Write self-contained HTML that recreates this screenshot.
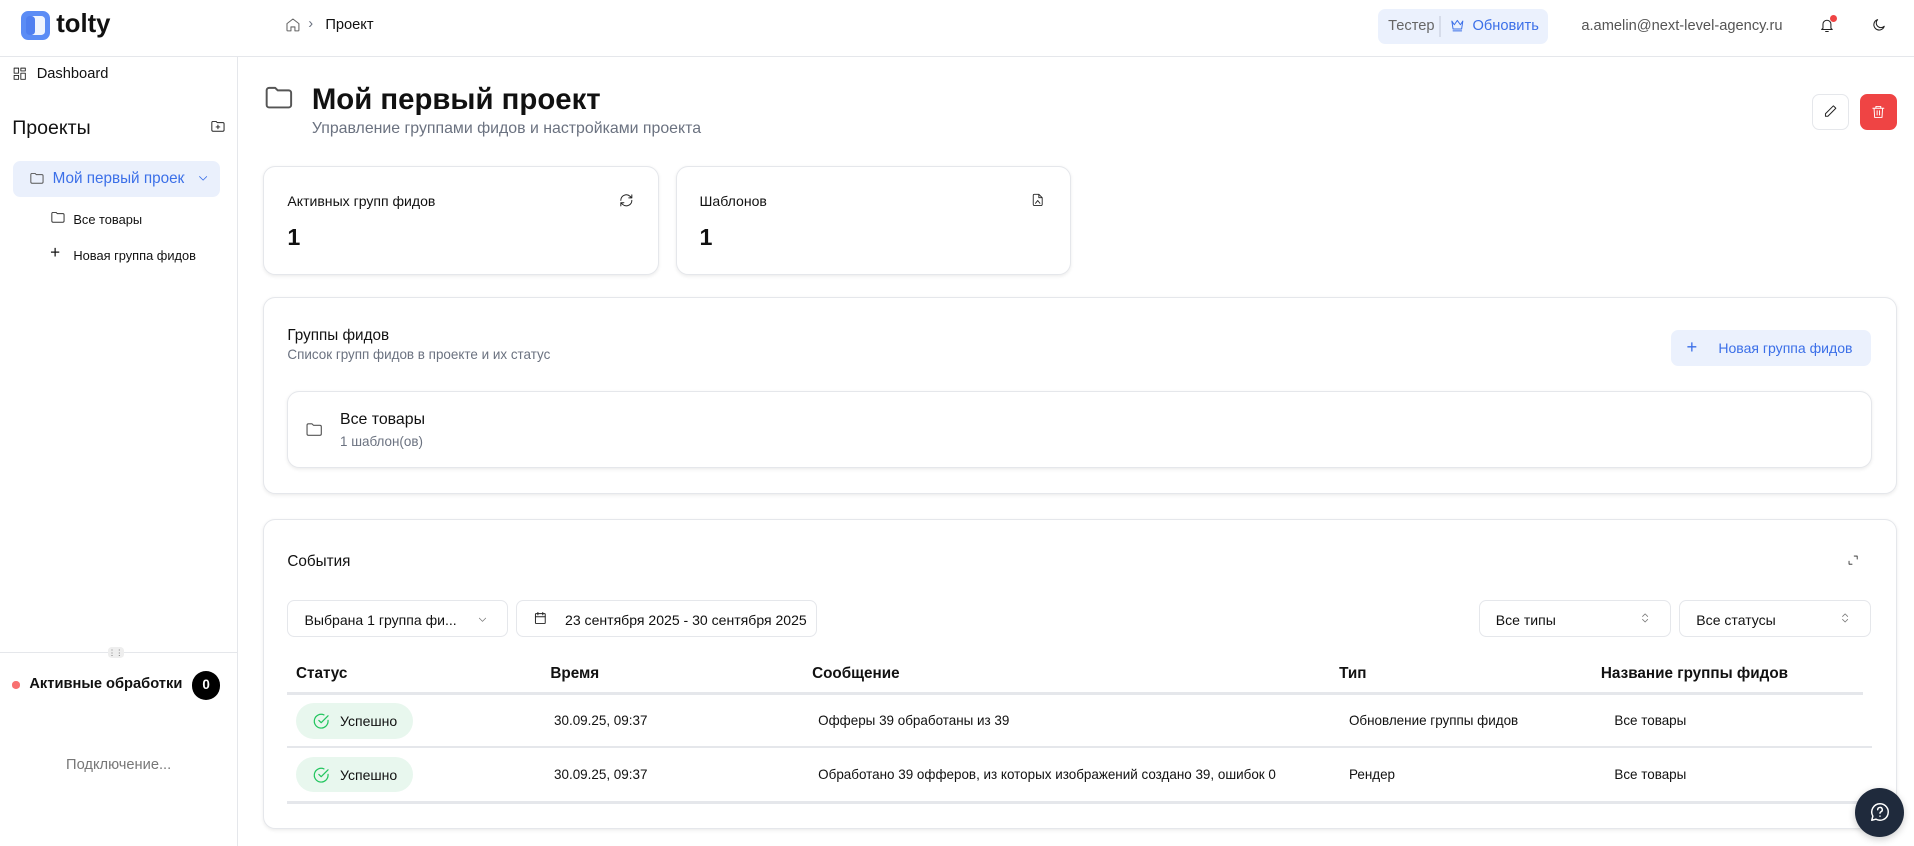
<!DOCTYPE html>
<html><head><meta charset="utf-8"><style>
html{zoom:1.2230}
*{box-sizing:border-box;margin:0;padding:0}
body{width:1565px;height:692px;overflow:hidden;background:#fff;font-family:"Liberation Sans","Noto Sans CJK SC",sans-serif;color:#111;font-size:12px;position:relative}
.a{position:absolute;white-space:nowrap}
.card{position:absolute;border:1px solid #e5e7eb;border-radius:10px;background:#fff;box-shadow:0 1px 3px rgba(0,0,0,.08)}
.g{color:#6b7280}
.b{font-weight:bold}
svg{position:absolute;fill:none;stroke:currentColor;stroke-width:1.6;stroke-linecap:round;stroke-linejoin:round}
.btn{position:absolute;border:1px solid #e5e7eb;border-radius:6px;background:#fff}
.hl{position:absolute;height:2px;background:#e5e7eb}
.badge{position:absolute;left:242px;width:96px;height:29px;border-radius:15px;background:#e8f7ee}
</style></head><body>
<!-- header -->
<div class="a" style="left:0;top:46px;width:1565px;height:1px;background:#e5e7eb"></div>
<div class="a" style="left:17px;top:9px;width:24px;height:24px;border-radius:6px;background:#5b8cf5"></div>
<div class="a" style="left:24px;top:13px;width:13px;height:16px;border-radius:3px;background:#fff;opacity:.9"></div>
<div class="a" style="left:21px;top:13px;width:8px;height:16px;border-radius:3px;background:#4f7ff0"></div>
<div class="a b" style="left:46px;top:8px;font-size:21px;color:#111">tolty</div>
<svg style="left:233px;top:14px" width="13" height="13" viewBox="0 0 24 24" color="#666"><path d="M3 10l9-7 9 7v10a1 1 0 0 1-1 1h-5v-6h-6v6H4a1 1 0 0 1-1-1z"/></svg>
<div class="a g" style="left:252px;top:13px;font-size:12px">›</div>
<div class="a" style="left:266px;top:14px;font-size:12px">Проект</div>
<div class="a" style="left:1127px;top:7px;width:139px;height:29px;border-radius:6px;background:#ebf1fd"></div>
<div class="a g" style="left:1135px;top:15px;font-size:12px;color:#666">Тестер</div>
<div class="a" style="left:1177px;top:13px;width:1px;height:17px;background:#d6dcea"></div>
<svg style="left:1186px;top:15px" width="12" height="12" viewBox="0 0 24 24" color="#3b6fe8"><path d="M3 5l4 6 5-7 5 7 4-6-2 13H5z M5 21h14"/></svg>
<div class="a" style="left:1204px;top:15px;font-size:12px;color:#3b6fe8">Обновить</div>
<div class="a" style="left:1293px;top:15px;font-size:12px;color:#555">a.amelin@next-level-agency.ru</div>
<svg style="left:1487px;top:14px" width="13" height="14" viewBox="0 0 24 24" color="#222"><path d="M6 16V10a6 6 0 0 1 12 0v6l2 2H4z M10 21h4"/></svg>
<div class="a" style="left:1496px;top:12px;width:6px;height:6px;border-radius:3px;background:#ef4444"></div>
<svg style="left:1530px;top:14px" width="13" height="13" viewBox="0 0 24 24" color="#222"><path d="M20 14A8 8 0 1 1 10 4a6 6 0 0 0 10 10z"/></svg>
<!-- sidebar -->
<div class="a" style="left:194px;top:47px;width:1px;height:645px;background:#e5e7eb"></div>
<svg style="left:11px;top:55px" width="11" height="11" viewBox="0 0 24 24" color="#222" stroke-width="2.5"><rect x="2" y="2" width="8" height="9"/><rect x="14" y="2" width="8" height="5"/><rect x="14" y="11" width="8" height="11"/><rect x="2" y="15" width="8" height="7"/></svg>
<div class="a" style="left:30px;top:54px;font-size:12px">Dashboard</div>
<div class="a" style="left:10px;top:96px;font-size:16px">Проекты</div>
<svg style="left:172px;top:97px" width="13" height="12" viewBox="0 0 24 24" color="#222" stroke-width="2"><path d="M2 6a2 2 0 0 1 2-2h5l2 2h9a2 2 0 0 1 2 2v10a2 2 0 0 1-2 2H4a2 2 0 0 1-2-2z M12 10v6 M9 13h6"/></svg>
<div class="a" style="left:11px;top:132px;width:169px;height:29px;border-radius:6px;background:#eaf0fc"></div>
<svg style="left:24px;top:140px" width="13" height="12" viewBox="0 0 24 24" color="#555" stroke-width="2"><path d="M2 6a2 2 0 0 1 2-2h5l2 2h9a2 2 0 0 1 2 2v10a2 2 0 0 1-2 2H4a2 2 0 0 1-2-2z"/></svg>
<div class="a" style="left:43px;top:139px;font-size:12.5px;color:#3b6fe8;width:108px;overflow:hidden">Мой первый проект</div>
<svg style="left:161px;top:141px" width="10" height="10" viewBox="0 0 24 24" color="#3b6fe8"><path d="M5 9l7 7 7-7"/></svg>
<svg style="left:41px;top:172px" width="13" height="12" viewBox="0 0 24 24" color="#333" stroke-width="2"><path d="M2 6a2 2 0 0 1 2-2h5l2 2h9a2 2 0 0 1 2 2v10a2 2 0 0 1-2 2H4a2 2 0 0 1-2-2z"/></svg>
<div class="a" style="left:60px;top:173px;font-size:10.5px">Все товары</div>
<div class="a" style="left:41px;top:199px;font-size:14px">+</div>
<div class="a" style="left:60px;top:203px;font-size:10.5px">Новая группа фидов</div>
<div class="a" style="left:0;top:533px;width:194px;height:1px;background:#e5e7eb"></div>
<div class="a" style="left:88px;top:529px;width:13px;height:9px;border-radius:3px;background:#eee;font-size:6px;text-align:center;color:#666;line-height:9px">⋮⋮</div>
<div class="a" style="left:10px;top:557px;width:6px;height:6px;border-radius:3px;background:#f87171"></div>
<div class="a b" style="left:24px;top:553px;font-size:12px">Активные обработки</div>
<div class="a b" style="left:157px;top:549px;width:23px;height:23px;border-radius:12px;background:#000;color:#fff;font-size:11px;text-align:center;line-height:23px">0</div>
<div class="a g" style="left:0;width:194px;text-align:center;top:619px;font-size:12px;color:#777">Подключение...</div>
<!-- title -->
<svg style="left:215px;top:68px" width="26" height="24" viewBox="0 0 24 24" color="#555" stroke-width="1.8"><path d="M2 6a2 2 0 0 1 2-2h5l2 2h9a2 2 0 0 1 2 2v10a2 2 0 0 1-2 2H4a2 2 0 0 1-2-2z"/></svg>
<div class="a b" style="left:255px;top:68px;font-size:24px">Мой первый проект</div>
<div class="a g" style="left:255px;top:98px;font-size:13px">Управление группами фидов и настройками проекта</div>
<div class="btn" style="left:1482px;top:77px;width:30px;height:29px"></div>
<svg style="left:1491px;top:85px" width="12" height="12" viewBox="0 0 24 24" color="#222" stroke-width="2"><path d="M17 3l4 4L8 20H4v-4z"/></svg>
<div class="a" style="left:1521px;top:77px;width:30px;height:29px;border-radius:6px;background:#ef4444"></div>
<svg style="left:1530px;top:85px" width="12" height="13" viewBox="0 0 24 24" color="#fff" stroke-width="2"><path d="M3 6h18 M8 6V3h8v3 M5 6l1 15h12l1-15 M10 10v7 M14 10v7"/></svg>
<!-- stat cards -->
<div class="card" style="left:215px;top:136px;width:324px;height:89px"></div>
<div class="a" style="left:235px;top:158px;font-size:11.5px">Активных групп фидов</div>
<svg style="left:506px;top:158px" width="12" height="12" viewBox="0 0 24 24" color="#222" stroke-width="2"><path d="M21 12a9 9 0 0 1-15 6.7L3 16 M3 12a9 9 0 0 1 15-6.7L21 8 M21 3v5h-5 M3 21v-5h5"/></svg>
<div class="a b" style="left:235px;top:183px;font-size:19px">1</div>
<div class="card" style="left:553px;top:136px;width:323px;height:89px"></div>
<div class="a" style="left:572px;top:158px;font-size:11.5px">Шаблонов</div>
<svg style="left:843px;top:157px" width="11" height="13" viewBox="0 0 24 24" color="#222" stroke-width="2"><path d="M14 2H6a2 2 0 0 0-2 2v16a2 2 0 0 0 2 2h12a2 2 0 0 0 2-2V8z M14 2v6h6 M8 18l4-5 4 5"/></svg>
<div class="a b" style="left:572px;top:183px;font-size:19px">1</div>
<!-- groups -->
<div class="card" style="left:215px;top:243px;width:1336px;height:161px"></div>
<div class="a" style="left:235px;top:267px;font-size:12.5px">Группы фидов</div>
<div class="a g" style="left:235px;top:284px;font-size:11px">Список групп фидов в проекте и их статус</div>
<div class="a" style="left:1366px;top:270px;width:164px;height:29px;border-radius:6px;background:#ebf1fd"></div>
<div class="a" style="left:1379px;top:275px;font-size:15px;color:#3b6fe8">+</div>
<div class="a" style="left:1405px;top:278px;font-size:11.5px;color:#3b6fe8">Новая группа фидов</div>
<div class="card" style="left:235px;top:320px;width:1296px;height:63px"></div>
<svg style="left:249px;top:344px" width="15" height="14" viewBox="0 0 24 24" color="#555" stroke-width="1.8"><path d="M2 6a2 2 0 0 1 2-2h5l2 2h9a2 2 0 0 1 2 2v10a2 2 0 0 1-2 2H4a2 2 0 0 1-2-2z"/></svg>
<div class="a" style="left:278px;top:336px;font-size:13px">Все товары</div>
<div class="a g" style="left:278px;top:355px;font-size:11px">1 шаблон(ов)</div>
<!-- events -->
<div class="card" style="left:215px;top:424px;width:1336px;height:254px"></div>
<div class="a" style="left:235px;top:452px;font-size:12.5px">События</div>
<svg style="left:1510px;top:453px" width="10" height="10" viewBox="0 0 24 24" color="#222" stroke-width="3"><path d="M14 4h6v6 M10 20H4v-6"/></svg>
<div class="btn" style="left:235px;top:491px;width:180px;height:30px"></div>
<div class="a" style="left:249px;top:500px;font-size:11.5px">Выбрана 1 группа фи...</div>
<svg style="left:390px;top:502px" width="9" height="9" viewBox="0 0 24 24" color="#777"><path d="M5 9l7 7 7-7"/></svg>
<div class="btn" style="left:422px;top:491px;width:246px;height:30px"></div>
<svg style="left:436px;top:499px" width="12" height="13" viewBox="0 0 24 24" color="#222" stroke-width="2"><rect x="4" y="5" width="16" height="16" rx="1"/><path d="M4 10h16 M8 3v4 M16 3v4"/></svg>
<div class="a" style="left:462px;top:500px;font-size:11.5px">23 сентября 2025 - 30 сентября 2025</div>
<div class="btn" style="left:1209px;top:491px;width:157px;height:30px"></div>
<div class="a" style="left:1223px;top:500px;font-size:11.5px">Все типы</div>
<svg style="left:1340px;top:499px" width="10" height="13" viewBox="0 0 24 24" color="#777"><path d="M7 9l5-5 5 5 M7 15l5 5 5-5"/></svg>
<div class="btn" style="left:1373px;top:491px;width:157px;height:30px"></div>
<div class="a" style="left:1387px;top:500px;font-size:11.5px">Все статусы</div>
<svg style="left:1504px;top:499px" width="10" height="13" viewBox="0 0 24 24" color="#777"><path d="M7 9l5-5 5 5 M7 15l5 5 5-5"/></svg>
<div class="a b" style="left:242px;top:544px;font-size:12.5px">Статус</div>
<div class="a b" style="left:450px;top:544px;font-size:12.5px">Время</div>
<div class="a b" style="left:664px;top:544px;font-size:12.5px">Сообщение</div>
<div class="a b" style="left:1095px;top:544px;font-size:12.5px">Тип</div>
<div class="a b" style="left:1309px;top:544px;font-size:12.5px">Название группы фидов</div>
<div class="hl" style="left:235px;top:566px;width:1288px"></div>
<div class="badge" style="top:575px"></div>
<svg style="left:255px;top:582px" width="15" height="15" viewBox="0 0 24 24" color="#22c55e" stroke-width="2"><path d="M21 11v1a9 9 0 1 1-5.3-8.2 M21 5l-9 9-3-3"/></svg>
<div class="a" style="left:278px;top:583px;font-size:11.5px">Успешно</div>
<div class="a" style="left:453px;top:583px;font-size:11px">30.09.25, 09:37</div>
<div class="a" style="left:669px;top:583px;font-size:11px">Офферы 39 обработаны из 39</div>
<div class="a" style="left:1103px;top:583px;font-size:11px">Обновление группы фидов</div>
<div class="a" style="left:1320px;top:583px;font-size:11px">Все товары</div>
<div class="hl" style="left:235px;top:610px;width:1296px"></div>
<div class="badge" style="top:619px"></div>
<svg style="left:255px;top:626px" width="15" height="15" viewBox="0 0 24 24" color="#22c55e" stroke-width="2"><path d="M21 11v1a9 9 0 1 1-5.3-8.2 M21 5l-9 9-3-3"/></svg>
<div class="a" style="left:278px;top:627px;font-size:11.5px">Успешно</div>
<div class="a" style="left:453px;top:627px;font-size:11px">30.09.25, 09:37</div>
<div class="a" style="left:669px;top:627px;font-size:11px">Обработано 39 офферов, из которых изображений создано 39, ошибок 0</div>
<div class="a" style="left:1103px;top:627px;font-size:11px">Рендер</div>
<div class="a" style="left:1320px;top:627px;font-size:11px">Все товары</div>
<div class="hl" style="left:235px;top:655px;width:1296px"></div>
<div class="a" style="left:1517px;top:644px;width:40px;height:40px;border-radius:20px;background:#1f2a3c;box-shadow:0 2px 6px rgba(0,0,0,.2)"></div>
<svg style="left:1528px;top:655px" width="18" height="18" viewBox="0 0 24 24" color="#fff" stroke-width="2"><path d="M12 3a9 9 0 1 1-4.5 16.8L3 21l1.2-4.5A9 9 0 0 1 12 3z M9.5 9.5a2.5 2.5 0 1 1 3.5 2.3c-.6.3-1 .8-1 1.5 M12 16.5v.1"/></svg>
</body></html>
